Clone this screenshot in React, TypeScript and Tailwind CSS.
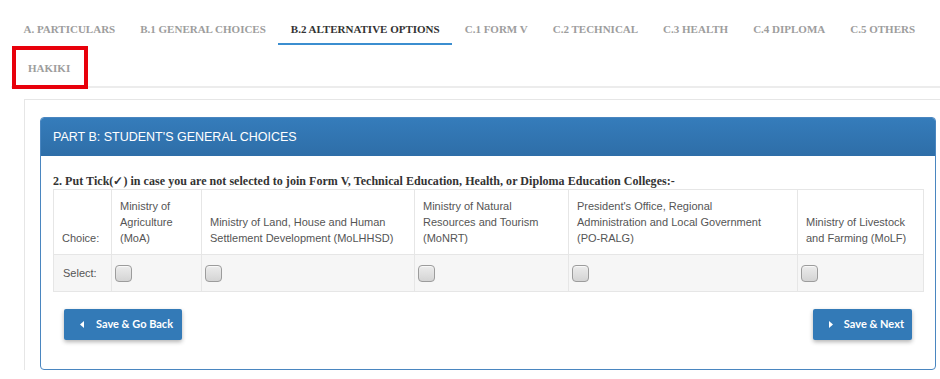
const tabs = [
  { label: 'A. Particulars' },
  { label: 'B.1 General Choices' },
  { label: 'B.2 Alternative Options', active: true },
  { label: 'C.1 Form V' },
  { label: 'C.2 Technical' },
  { label: 'C.3 Health' },
  { label: 'C.4 Diploma' },
  { label: 'C.5 Others' },
];

const ministries = [
  { name: 'Ministry of Agriculture (MoA)', pad: 'pr-2' },
  { name: 'Ministry of Land, House and Human Settlement Development (MoLHHSD)', pad: 'pr-2' },
  { name: 'Ministry of Natural Resources and Tourism (MoNRT)', pad: 'pr-2' },
  { name: "President's Office, Regional Administration and Local Government (PO-RALG)", pad: 'pr-[16px]' },
  { name: 'Ministry of Livestock and Farming (MoLF)', pad: 'pr-2' },
];

function Caret({ dir }: { dir: 'left' | 'right' }) {
  return (
    <svg width="4" height="7" viewBox="0 0 4 7" className="shrink-0">
      {dir === 'left' ? (
        <polygon points="4,0 4,7 0,3.5" fill="white" />
      ) : (
        <polygon points="0,0 0,7 4,3.5" fill="white" />
      )}
    </svg>
  );
}

function Box() {
  return (
    <div className="w-[17px] h-[17px] rounded-[4px] border border-[#9c9c9c] bg-gradient-to-b from-[#ececec] to-[#d4d4d4] shadow-[inset_0_1px_1px_rgba(255,255,255,0.7)]" />
  );
}

export default function App() {
  return (
    <div className="w-[940px] h-[379px] overflow-hidden bg-white">
      {/* Tabs */}
      <div className="ml-[11px] pt-[13px] border-b-2 border-[#ececec] font-['Liberation_Serif',serif] text-[11px] font-bold uppercase">
        <ul className="flex">
          {tabs.map((t) => (
            <li
              key={t.label}
              className={`px-[12.5px] pt-2 pb-[6px] leading-4 border-b-2 whitespace-nowrap ${
                t.active ? 'border-[#3b8ed0] text-[#333]' : 'border-transparent text-[#9d9d9d]'
              }`}
            >
              {t.label}
            </li>
          ))}
        </ul>
        <ul className="flex">
          <li className="ml-px mt-px -mb-[3px] border-4 border-[#e8000b] pl-[12px] pr-[14px] pt-[10px] pb-[9px] leading-4 text-[#9d9d9d]">
            Hakiki
          </li>
        </ul>
      </div>

      {/* Content well */}
      <div className="ml-6 mt-[11px] border-l border-t border-[#e6e6e6] pl-[15px] pt-[17px] pr-[4px]">
        <div className="border border-[#4a86c0] rounded-[4px] overflow-hidden bg-white">
          <div className="h-[38px] flex items-center pl-3 bg-gradient-to-b from-[#357cbb] to-[#2e6ea8] text-white font-['Liberation_Sans',Arial,sans-serif] text-[12.5px]">
            PART B: STUDENT'S GENERAL CHOICES
          </div>

          <div className="px-3 pb-[29px]">
            <p className="pt-[17px] leading-4 font-['Liberation_Serif',serif] text-[12px] font-bold text-[#333] tracking-[0.04px]">
              2. Put Tick(✓) in case you are not selected to join Form V, Technical Education, Health, or Diploma Education Colleges:-
            </p>

            <table className="w-[870px] table-fixed border-collapse font-['Liberation_Sans',Arial,sans-serif] text-[11px] text-[#555]">
              <colgroup>
                <col className="w-[58px]" />
                <col className="w-[90px]" />
                <col className="w-[213px]" />
                <col className="w-[154px]" />
                <col className="w-[229px]" />
                <col className="w-[126px]" />
              </colgroup>
              <tbody>
                <tr>
                  <td className="border border-[#e6e6e6] px-2 py-2 align-bottom leading-4">Choice:</td>
                  {ministries.map((m) => (
                    <td key={m.name} className={`border border-[#e6e6e6] pl-2 ${m.pad} py-2 align-bottom leading-4`}>
                      {m.name}
                    </td>
                  ))}
                </tr>
                <tr className="bg-[#f6f6f6] h-[37px]">
                  <td className="border border-[#e6e6e6] pl-[9px] align-middle">Select:</td>
                  {ministries.map((m) => (
                    <td key={m.name} className="border border-[#e6e6e6] pl-[3px] align-middle">
                      <Box />
                    </td>
                  ))}
                </tr>
              </tbody>
            </table>

            <div className="mt-[17px] px-[11px] flex justify-between font-['Lato',sans-serif] text-[11px] font-bold text-white">
              <button className="h-[31px] flex items-center gap-3 pl-4 pr-[9px] bg-[#337ab7] rounded-[2px] shadow-[0_2px_4px_rgba(0,0,0,0.3)]">
                <Caret dir="left" />
                Save &amp; Go Back
              </button>
              <button className="h-[31px] flex items-center gap-[11px] pl-4 pr-[8px] bg-[#337ab7] rounded-[2px] shadow-[0_2px_4px_rgba(0,0,0,0.3)]">
                <Caret dir="right" />
                Save &amp; Next
              </button>
            </div>
          </div>
        </div>
      </div>
    </div>
  );
}
